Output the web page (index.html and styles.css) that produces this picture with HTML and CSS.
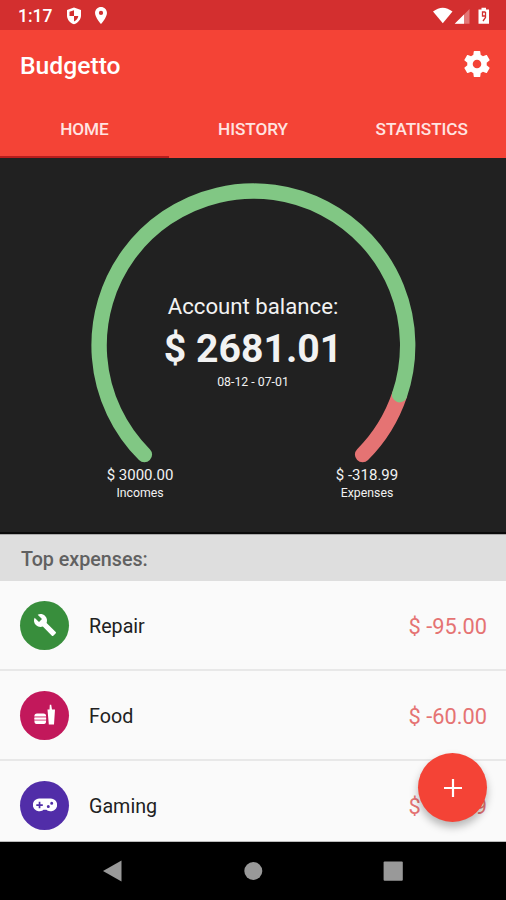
FILE: index.html
```html
<!DOCTYPE html>
<html lang="en">
<head>
<meta charset="utf-8">
<title>Budgetto</title>
<link rel="stylesheet" href="styles.css">
</head>
<body>
<div class="screen">
  <div class="status">
    <span class="clock">1:17</span>
    <svg class="shield" viewBox="0 0 16 18"><path fill="#fff" fill-rule="evenodd" d="M8 .5 15 3v5.500c0 4-3 7.400-7 8.800-4-1.400-7-4.800-7-8.800V3zM8 3.200 3.500 4.800V9H8zM8 9v5.500c2.400-1.200 4-3.200 4.300-5.500z"/></svg>
    <svg class="pin" viewBox="5 2 14 20"><path fill="#fff" d="M12 2C8.130 2 5 5.130 5 9c0 5.250 7 13 7 13s7-7.750 7-13c0-3.870-3.130-7-7-7zm0 9.500a2.500 2.500 0 1 1 0-5 2.500 2.500 0 0 1 0 5z"/></svg>
    <svg class="signals" viewBox="0 0 57 18"><path fill="#fff" d="M0 4.500Q9.700-3.200 19.500 4.500L9.800 16.200z"/><path fill="#fff" opacity=".35" d="M36.500 2v14.800H22z"/><path fill="#fff" d="M31 7.500v9.300h-9.300z"/><path fill="#fff" d="M45.500 2.500h3V.8h4.500v1.700h3v14.300H45.500z"/><path fill="none" stroke="#d32f2f" stroke-width="1.300" d="M52.500 5h-3v4h3V5v5.500L50 14"/></svg>
  </div>
  <header class="appbar">
    <h1>Budgetto</h1>
    <svg class="gear" viewBox="2 2 20 20"><path fill="#fff" d="M19.430 12.980c.04-.32.07-.64.07-.98s-.03-.66-.07-.98l2.110-1.650c.19-.15.24-.42.12-.64l-2-3.460c-.12-.22-.39-.3-.61-.22l-2.490 1c-.52-.4-1.080-.73-1.690-.98l-.38-2.650C14.460 2.180 14.250 2 14 2h-4c-.25 0-.46.18-.49.42l-.38 2.650c-.61.25-1.170.59-1.690.98l-2.490-1c-.23-.09-.49 0-.61.22l-2 3.460c-.13.22-.07.49.12.64l2.110 1.650c-.04.32-.07.65-.07.98s.03.66.07.98l-2.110 1.650c-.19.15-.24.42-.12.64l2 3.460c.12.22.39.3.61.22l2.490-1c.52.4 1.080.73 1.690.98l.38 2.650c.03.24.24.42.49.42h4c.25 0 .46-.18.49-.42l.38-2.650c.61-.25 1.170-.59 1.690-.98l2.490 1c.23.09.49 0 .61-.22l2-3.460c.12-.22.07-.49-.12-.64zM12 15.300a3.300 3.300 0 1 1 0-6.600 3.300 3.300 0 0 1 0 6.600z"/></svg>
  </header>
  <nav class="tabs">
    <a class="tab active">HOME</a>
    <a class="tab">HISTORY</a>
    <a class="tab">STATISTICS</a>
  </nav>
  <section class="summary">
    <div class="gauge">
      <svg class="arc" viewBox="0 0 326 288" fill="none" stroke-width="15.400" stroke-linecap="round">
        <path stroke="#e57373" d="M309.500 217A154.300 154.300 0 0 1 272.600 276.600"/>
        <path stroke="#81c784" d="M54.400 276.600A154.300 154.300 0 1 1 309.600 216.700"/>
      </svg>
      <div class="balance">
        <div class="label">Account balance:</div>
        <div class="amount">$ 2681.01</div>
        <div class="dates">08-12 - 07-01</div>
      </div>
    </div>
    <div class="totals">
      <div class="total"><div class="sum">$ 3000.00</div><div class="kind">Incomes</div></div>
      <div class="total"><div class="sum">$ -318.99</div><div class="kind">Expenses</div></div>
    </div>
  </section>
  <h2>Top expenses:</h2>
  <main class="list">
    <div class="row">
      <span class="badge repair"><svg class="glyph" viewBox="0 0 24 24"><path fill="#fff" d="m22.700 19-9.100-9.100c.9-2.300.4-5-1.500-6.900-2-2-5-2.400-7.400-1.300L9 6 6 9 1.600 4.700C.4 7.100.9 10.100 2.900 12.100c1.900 1.900 4.600 2.400 6.900 1.500l9.100 9.100c.4.4 1 .4 1.400 0l2.300-2.300c.5-.4.5-1.100.1-1.400z"/></svg></span>
      <span class="name">Repair</span><span class="price">$ -95.00</span>
    </div>
    <div class="row">
      <span class="badge food"><svg class="glyph" viewBox="0 0 24 24"><path fill="#fff" d="M14.500 6.500h2l.3-4.700h1.400l.8 4.700h3L21 21.500h-5.200zM4 10.500h6.500q2.600 0 2.600 2.800H1.400q0-2.800 2.600-2.800zM1.400 17.800h11.700q0 3.200-2.100 3.200H3.500q-2.100 0-2.100-3.200z"/><path fill="#efa0bd" d="M1.400 13.300h11.700v4.500H1.400z"/><path stroke="#fff" stroke-width="1.300" d="M1.400 15.600h11.700"/></svg></span>
      <span class="name">Food</span><span class="price">$ -60.00</span>
    </div>
    <div class="row">
      <span class="badge gaming"><svg class="glyph" viewBox="0 0 24 24"><path fill="#fff" fill-rule="evenodd" d="M6.500 5.500h11a6.400 6.400 0 1 1-4 11.200h-3a6.400 6.400 0 1 1-4-11.200zM5.700 8.800v2.400H3.300v1.700h2.400v2.400h1.700v-2.400h2.400v-1.700H7.400V8.800zM15.300 12a1.500 1.500 0 1 0 0 3 1.500 1.500 0 0 0 0-3zM18.700 8.800a1.500 1.500 0 1 0 0 3 1.500 1.500 0 0 0 0-3z"/></svg></span>
      <span class="name">Gaming</span><span class="price">$ -49.99</span>
    </div>
    <button class="fab" aria-label="Add"><svg viewBox="0 0 18 18"><path stroke="#fff" stroke-width="2.200" d="M9 0v18M0 9h18"/></svg></button>
  </main>
  <footer class="navbar">
    <svg viewBox="0 0 20 22"><path fill="#999" d="M0 11 18.500.5v21z"/></svg>
    <svg viewBox="0 0 20 22"><circle cx="10.300" cy="11" r="9" fill="#999"/></svg>
    <svg viewBox="0 0 20 22"><rect x=".6" y="1.500" width="19.200" height="19.200" rx="1" fill="#999"/></svg>
  </footer>
</div>
</body>
</html>
```

FILE: styles.css
```css
* { box-sizing: border-box; }
body { margin: 0; font-family: Roboto, sans-serif; }
h1, h2 { margin: 0; font-weight: 500; }
svg { display: block; flex: none; }
.screen { width: 506px; height: 900px; display: flex; flex-direction: column; overflow: hidden; background: #fafafa; }
.status { height: 30px; flex: none; display: flex; align-items: center; padding: 1px 16px 0 18px; background: #d32f2f; color: #fff; }
.clock { width: 48px; font-size: 17.500px; font-weight: 500; }
.shield { width: 16px; height: 18px; }
.pin { width: 12px; height: 17px; margin-left: 13px; }
.signals { width: 57px; height: 18px; margin-left: auto; }
.appbar { height: 70px; flex: none; display: flex; align-items: center; justify-content: space-between; padding: 0 16px 0 20px; background: #f44336; color: #fff; }
.appbar h1 { font-size: 24.700px; }
.gear { width: 26px; height: 26px; margin-top: -2px; }
.tabs { height: 58px; flex: none; display: grid; grid-template-columns: repeat(3, 1fr); background: #f44336; }
.tab { display: flex; align-items: center; justify-content: center; padding-top: 2px; border-bottom: 2px solid transparent; color: #ffe4e1; font-size: 17.200px; font-weight: 500; letter-spacing: -.1px; }
.tab.active { border-bottom-color: #b71c1c; }
.summary { height: 376px; flex: none; padding-top: 20px; background: #212121; border-bottom: 2px solid #0a0a0a; color: #f2f2f2; }
.gauge { display: grid; width: 326px; height: 288px; margin: 0 auto; }
.arc, .balance { grid-area: 1 / 1; }
.arc { width: 326px; height: 288px; }
.balance { text-align: center; padding-top: 113px; }
.label { font-size: 22.200px; line-height: 30px; }
.amount { font-size: 39.200px; font-weight: 700; line-height: 48px; margin-top: 4px; }
.dates { font-size: 12.300px; line-height: 16px; margin-top: 1px; }
.totals { display: grid; grid-template-columns: 140px 140px; justify-content: center; column-gap: 87px; padding-left: 1px; text-align: center; }
.sum { font-size: 15px; line-height: 18px; }
.kind { font-size: 12.300px; line-height: 18px; }
h2 { height: 47px; flex: none; padding: 0 21px; border-top: 1px solid #aaa; background: #dedede; color: #616161; font-size: 19.700px; line-height: 49px; }
.list { position: relative; height: 261px; flex: none; overflow: hidden; border-bottom: 1px solid #bbb; }
.row { height: 90px; display: flex; align-items: center; padding: 0 19px 0 20px; border-bottom: 2px solid #e8e8e8; }
.badge { width: 49px; height: 49px; display: flex; align-items: center; justify-content: center; border-radius: 50%; }
.repair { background: #388e3c; }
.food { background: #c2185b; }
.gaming { background: #512da8; }
.glyph { width: 24px; height: 24px; }
.name { margin-left: 20px; padding-top: 2px; color: #212121; font-size: 19.700px; }
.price { margin-left: auto; padding-top: 2px; color: #e57373; font-size: 21.800px; }
.fab { position: absolute; left: 418px; top: 172px; width: 69px; height: 69px; padding: 0; display: flex; align-items: center; justify-content: center; border: 0; border-radius: 50%; background: #f44336; box-shadow: 0 5px 9px rgba(0, 0, 0, .28); }
.fab svg { width: 18px; height: 18px; }
.navbar { height: 58px; flex: none; display: flex; justify-content: center; align-items: center; gap: 120px; background: #000; }
.navbar svg { width: 20px; height: 22px; }
```
